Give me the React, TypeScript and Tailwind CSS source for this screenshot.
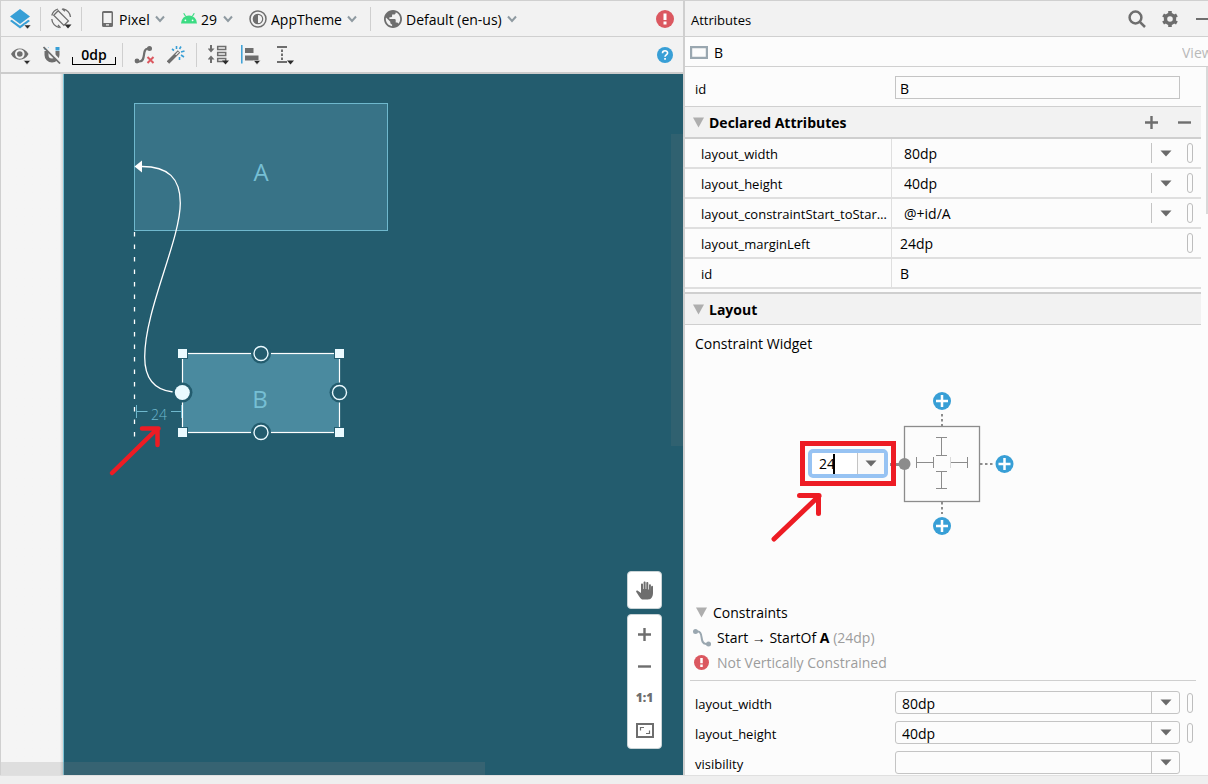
import React from 'react';

interface SelectFieldProps {
  label: string;
  value: string;
}

interface DeclaredAttribute {
  name: string;
  value: string;
  dropdown?: boolean;
  flag?: boolean;
}

const declaredAttributes: DeclaredAttribute[] = [
  { name: 'layout_width', value: '80dp', dropdown: true, flag: true },
  { name: 'layout_height', value: '40dp', dropdown: true, flag: true },
  { name: 'layout_constraintStart_toStartOf', value: '@+id/A', dropdown: true, flag: true },
  { name: 'layout_marginLeft', value: '24dp', flag: true },
  { name: 'id', value: 'B' },
];

const layoutAttributes: DeclaredAttribute[] = [
  { name: 'layout_width', value: '80dp', flag: true },
  { name: 'layout_height', value: '40dp', flag: true },
  { name: 'visibility', value: '' },
];

/* ---------- Icons ---------- */

const Chevron = () => (
  <svg width="11" height="8" viewBox="-1 0 11 8" fill="none" stroke="#8f9aa1" strokeWidth="2">
    <path d="M1 1.500 5 6 9 1.500" />
  </svg>
);

const Caret = () => (
  <svg width="12" height="7" viewBox="0 0 12 7">
    <path d="M.5.5h11L6 6.500z" fill="#6a6a6a" />
  </svg>
);

const Disclosure = () => (
  <svg width="11" height="11" viewBox="0 0 11 11" className="shrink-0">
    <path d="M0 .5h11L5.500 10.500z" fill="#aeaeae" />
  </svg>
);

const LayersIcon = () => (
  <svg width="22" height="22" viewBox="0 0 22 22">
    <path d="M10 1 20 8.500 10 16 0 8.500z" fill="#389fd6" />
    <path d="M1.700 11.800 10 17.800l8.300-6 1.700 1.300L10 20.500 0 13.100z" fill="#389fd6" />
    <path d="M14 17h7l-3.500 4z" fill="#2b2b2b" stroke="#f2f2f2" strokeWidth=".5" />
  </svg>
);

const RotateIcon = () => (
  <svg width="22" height="22" viewBox="-1 0 22 22" fill="none" stroke="#6e6e6e" strokeWidth="1.300">
    <path d="M7.200 2.700 17.400 12.900 12.900 17.400 2.700 7.200z" />
    <path d="M12 1a9 9 0 0 1 7.500 8M.8 11a9 9 0 0 0 7.700 8.500" />
    <path d="M.8 7.500A9 9 0 0 1 7 1M11 .8l3 2.500M9.500 19.800 7 17" />
    <path d="M13.500 16.500h7l-3.500 4z" fill="#2b2b2b" stroke="none" />
  </svg>
);

const PhoneIcon = () => (
  <svg width="15" height="16" viewBox="-2 0 15 16" fill="#6e6e6e">
    <path d="M1.500 0h8A1.500 1.500 0 0 1 11 1.500v13A1.500 1.500 0 0 1 9.500 16h-8A1.500 1.500 0 0 1 0 14.500v-13A1.500 1.500 0 0 1 1.500 0zM1.500 2v10h8V2zM4 13.300v1.200h3v-1.200z" fillRule="evenodd" />
  </svg>
);

const AndroidIcon = () => (
  <svg width="16" height="11" viewBox="0 0 16 11">
    <path d="M2.700.3 4.600 3.300M13.300.3l-1.900 3" stroke="#3ddc84" strokeWidth="1.200" />
    <path d="M0 10.500a8 8 0 0 1 16 0z" fill="#3ddc84" />
    <circle cx="4.400" cy="7.300" r=".9" fill="#fff" />
    <circle cx="11.600" cy="7.300" r=".9" fill="#fff" />
  </svg>
);

const ThemeIcon = () => (
  <svg width="18" height="18" viewBox="0 0 18 18" fill="none" stroke="#6e6e6e">
    <circle cx="9" cy="9" r="8" strokeWidth="1.500" />
    <circle cx="9" cy="9" r="4.700" strokeWidth="1.200" />
    <path d="M9 4a5 5 0 0 0 0 10z" fill="#6e6e6e" stroke="none" />
  </svg>
);

const GlobeIcon = () => (
  <svg width="18" height="18" viewBox="2 2 20 20" fill="#6e6e6e">
    <path d="M12 2C6.480 2 2 6.480 2 12s4.480 10 10 10 10-4.480 10-10S17.520 2 12 2zm-1 17.930c-3.950-.49-7-3.850-7-7.930 0-.62.08-1.210.21-1.790L9 15v1c0 1.100.9 2 2 2v1.930zm6.900-2.540c-.26-.81-1-1.390-1.900-1.390h-1v-3c0-.55-.45-1-1-1H8v-2h2c.55 0 1-.45 1-1V7h2c1.100 0 2-.9 2-2v-.41c2.930 1.190 5 4.060 5 7.410 0 2.080-.8 3.970-2.100 5.390z" />
  </svg>
);

const ErrorIcon = ({ size }: { size: number }) => (
  <svg width={size} height={size} viewBox="0 0 18 18" className="shrink-0">
    <circle cx="9" cy="9" r="9" fill="#db5860" />
    <path d="M7.500 3.500h3v6.500h-3zM7.500 11.500h3v3h-3z" fill="#fff" />
  </svg>
);

const HelpIcon = () => (
  <svg width="16" height="16" viewBox="0 0 16 16">
    <circle cx="8" cy="8" r="8" fill="#389fd6" />
    <path d="M5.500 6.200c0-3.200 5.100-3.100 5.100-.2C10.600 7.900 8 8 8 9.800" fill="none" stroke="#fff" strokeWidth="1.600" />
    <path d="M7.200 11h1.700v1.700H7.200z" fill="#fff" />
  </svg>
);

const EyeIcon = () => (
  <svg width="20" height="20" viewBox="0 0 20 20">
    <path d="M0 9C3.500 1.500 14 1.500 17.500 9 14 16.500 3.500 16.500 0 9z" fill="#6e6e6e" />
    <circle cx="8.800" cy="9" r="3.800" fill="none" stroke="#f2f2f2" strokeWidth="2" />
    <path d="M12.500 15.500h7L16 19.500z" fill="#2b2b2b" stroke="#f2f2f2" strokeWidth=".5" />
  </svg>
);

const MagnetIcon = () => (
  <svg width="18" height="18" viewBox="0 0 18 18">
    <path d="M3.500 5v4a5.500 5.500 0 0 0 11 0V5" fill="none" stroke="#6e6e6e" strokeWidth="4" />
    <path d="M1.500 1h4v3h-4zM12.500 1h4v3.500h-4z" fill="#389fd6" />
    <path d="M2 0l15.500 15.500" stroke="#f2f2f2" strokeWidth="2.400" />
    <path d="M.5 1 17 17.500" stroke="#6e6e6e" strokeWidth="1.700" />
  </svg>
);

const ClearConstraintsIcon = () => (
  <svg width="22" height="18" viewBox="0 0 22 18">
    <path d="M3 15.500h2.500c7 0 2-13 8.500-13h2" fill="none" stroke="#6e6e6e" strokeWidth="2.200" />
    <circle cx="3" cy="15" r="2.400" fill="#6e6e6e" />
    <circle cx="15.500" cy="2.600" r="2.500" fill="#6e6e6e" />
    <path d="M13.500 11l6 6M19.500 11l-6 6" stroke="#db5860" strokeWidth="2" />
  </svg>
);

const WandIcon = () => (
  <svg width="18" height="18" viewBox="0 0 18 18" fill="none">
    <path d="M1 16.500 12 5.500" stroke="#6e6e6e" strokeWidth="3.400" />
    <path d="M8.700 8.800 11.500 6" stroke="#f2f2f2" strokeWidth="1.200" />
    <path d="M9.500 0v3M5 3l2 1.500M14 .5l-1.500 2.500M14 6l3.500-1M14 9l3 2M12.500 11v3" stroke="#389fd6" strokeWidth="1.600" />
  </svg>
);

const DistributeIcon = () => (
  <svg width="22" height="20" viewBox="1 0 22 20">
    <path d="M4 0v6M4 18v-6" stroke="#6e6e6e" strokeWidth="2" />
    <path d="M.5 3.500h7L4 7.500zM.5 14.500h7L4 10.500z" fill="#6e6e6e" />
    <path d="M10.700 1.500h8v3h-8zM10.700 7.500h8v3h-8zM10.700 13.500h8v3h-8z" fill="none" stroke="#6e6e6e" strokeWidth="1.500" />
    <path d="M15 15.500h7l-3.500 4z" fill="#2b2b2b" />
  </svg>
);

const AlignIcon = () => (
  <svg width="20" height="20" viewBox="0 0 20 20">
    <path d="M.8 0v18.500" stroke="#389fd6" strokeWidth="1.500" />
    <path d="M4 3h8.500v5H4zM4 10.500h13.500v5H4z" fill="#6e6e6e" />
    <path d="M12.500 15.500h7L16 19.500z" fill="#2b2b2b" stroke="#f2f2f2" strokeWidth=".5" />
  </svg>
);

const GuidelineIcon = () => (
  <svg width="18" height="20" viewBox="0 0 18 20">
    <path d="M1 2h10M1 17h10" stroke="#6e6e6e" strokeWidth="2" />
    <path d="M6 4.500v10.500" stroke="#6e6e6e" strokeWidth="2" strokeDasharray="2.500 1.500" />
    <path d="M11 15.500h7l-3.500 4z" fill="#2b2b2b" />
  </svg>
);

const SearchIcon = () => (
  <svg width="18" height="18" viewBox="0 0 18 18" fill="none" stroke="#6e6e6e" strokeWidth="2.500">
    <circle cx="7.500" cy="7.500" r="5.900" />
    <path d="M11.800 11.800 17 17" />
  </svg>
);

const GearIcon = () => (
  <svg width="18" height="18" viewBox="1 0 18 18" fill="none">
    <circle cx="9" cy="9" r="4.500" stroke="#6e6e6e" strokeWidth="3.400" />
    <path d="M9 1v3M9 14v3M2.100 5l2.600 1.500M13.300 11.500l2.600 1.500M2.100 13l2.600-1.500M13.300 6.500 15.900 5" stroke="#6e6e6e" strokeWidth="3.600" />
  </svg>
);

const HandIcon = () => (
  <svg width="18" height="19" viewBox="0 0 18 19" fill="#6e6e6e">
    <path d="M6 18.500C4 17.500 2 13.500.3 11c-.6-1 .6-1.800 1.500-1.200L5 12V3.500c0-1.400 2-1.400 2 0V8h.6V1.500c0-1.400 2-1.400 2 0V8h.7V2c0-1.400 2-1.400 2 0v6.500h.7V4.300c0-1.300 1.900-1.300 1.900 0V13c0 3-1.500 5.500-3.500 5.500z" />
    <path d="M15.200 5.500c0-1.100 1.800-1.100 1.800 0V12c0 3.500-1.700 6.500-4.500 6.500z" />
  </svg>
);

const FitIcon = () => (
  <svg width="18" height="15" viewBox="0 0 18 15" fill="none" stroke="#6e6e6e">
    <path d="M1 1h16v13H1z" strokeWidth="2" />
    <path d="M4.500 7.500v-3h3.500M13.500 7.500v3H10" strokeWidth="1.200" />
  </svg>
);

/* ---------- Shared controls ---------- */

const Separator = () => <span className="h-6 w-px bg-[#cfcfcf]" />;

const FlagButton = ({ label }: { label: string }) => (
  <button type="button" aria-label={label} className="h-5 w-[6px] shrink-0 rounded-[3px] border border-[#bdbdbd]" />
);

const ToolbarSelect: React.FC<SelectFieldProps & { icon: React.ReactNode }> = ({ label, value, icon }) => (
  <label className="flex items-center gap-1">
    {icon}
    <select aria-label={label} className="appearance-none bg-transparent pt-0.5 text-[14px] leading-5">
      <option>{value}</option>
    </select>
    <Chevron />
  </label>
);

const IconButton = ({ label, children }: { label: string; children: React.ReactNode }) => (
  <button type="button" aria-label={label} className="flex shrink-0 items-center justify-center">
    {children}
  </button>
);

/* ---------- Blueprint ---------- */

const cornerHandles = [
  [182, 353],
  [339, 353],
  [182, 432],
  [339, 432],
];

const openAnchors = [
  [261, 353.5],
  [339.5, 392.5],
  [261, 432.5],
];

const BlueprintDrawing = () => (
  <svg
    width="400"
    height="420"
    viewBox="0 74 400 420"
    className="absolute top-0 left-0"
    fontFamily="'Open Sans', sans-serif"
  >
    {/* View A */}
    <rect x="134.500" y="103.500" width="253" height="127" fill="#387387" stroke="#6fb8cd" />
    <text x="261" y="181" fontSize="24" textAnchor="middle" fill="#76bfd4">A</text>

    {/* View B */}
    <rect x="182.500" y="353.500" width="157" height="79" fill="#4a8a9f" stroke="#fff" strokeWidth="1.200" />
    <text x="260" y="408" fontSize="24" textAnchor="middle" fill="#76bfd4">B</text>

    {/* Constraint and margin guides */}
    <path d="M134.500 232v205" stroke="#fff" strokeWidth="1.300" strokeDasharray="4.500 8" />
    <path d="M142 166.500C168 166.500 180.300 178 180.300 203C180.300 240 144.700 310 144.700 357C144.700 378 154 390 173 392" fill="none" stroke="#fff" strokeWidth="1.300" />
    <path d="M134.500 166.500 142 160.500v12z" fill="#fff" />
    <path d="M136.500 405v13M136.500 411.500h11M171 411.500h11M181.500 405v13" stroke="#6fb8cd" />
    <text x="159" y="420" fontSize="14" textAnchor="middle" fill="#6fb8cd" fontWeight="300">24</text>

    {cornerHandles.map(([x, y]) => (
      <rect key={`${x}-${y}`} x={x - 4.5} y={y - 4.5} width="10" height="10" fill="#eafaff" stroke="#235c6e" />
    ))}
    {openAnchors.map(([x, y]) => (
      <g key={`${x}-${y}`}>
        <circle cx={x} cy={y} r="10" fill="#235c6e" />
        <circle cx={x} cy={y} r="7" fill="#235c6e" stroke="#eafaff" strokeWidth="1.400" />
      </g>
    ))}
    <circle cx="182.500" cy="392.500" r="10" fill="#235c6e" />
    <circle cx="182.300" cy="392.500" r="7.500" fill="#eafaff" />

    <path d="M112 473 157 429M142 428.500h16.500M157.500 428.500V445" fill="none" stroke="#ed1c24" strokeWidth="4.500" strokeLinecap="round" />
  </svg>
);

const DesignSurface = () => (
  <div className="relative flex flex-1 overflow-hidden border-l border-[#d0d0d0] bg-[#f5f5f5]">
    <div className="w-[62px] shrink-0 bg-linear-to-r from-[#f5f5f5] from-95% to-[#d5d5d5]" />
    <div className="flex-1 border-l border-[#7cc4d6] bg-[#235c6e]" />
    <div className="absolute inset-y-0 -left-px">
      <BlueprintDrawing />
    </div>
    <div className="absolute right-0 top-[60px] h-[312px] w-3 bg-[#7f7f7f]/15" />
    <div className="absolute bottom-0 left-0 h-[13px] w-[484px] bg-[#808080]/20" />

    <div className="absolute bottom-[26px] right-[21px] flex flex-col gap-[5px]">
      <button type="button" aria-label="Pan" className="flex h-[38px] w-[35px] items-center justify-center rounded border border-[#c9d3d6] bg-white">
        <HandIcon />
      </button>
      <div className="flex h-[135px] w-[35px] flex-col items-center rounded border border-[#c9d3d6] bg-white pt-[3px] *:h-8">
        <IconButton label="Zoom in">
          <svg width="13" height="13" viewBox="0 0 13 13" stroke="#6e6e6e" strokeWidth="2.400">
            <path d="M6.500 0v13M0 6.500h13" />
          </svg>
        </IconButton>
        <IconButton label="Zoom out">
          <svg width="13" height="13" viewBox="0 0 13 13" stroke="#6e6e6e" strokeWidth="2.400">
            <path d="M0 6.500h13" />
          </svg>
        </IconButton>
        <button type="button" className="text-[12px] leading-4 font-extrabold text-[#6e6e6e]">1:1</button>
        <IconButton label="Zoom to fit">
          <FitIcon />
        </IconButton>
      </div>
    </div>
  </div>
);

/* ---------- Toolbars ---------- */

const TopToolbar = () => (
  <div className="flex h-9 items-center border-b border-l border-[#d0d0d0] bg-[#f2f2f2] px-[9px]">
    <IconButton label="Design surface"><LayersIcon /></IconButton>
    <div className="flex items-center gap-[9px] pl-2">
      <Separator />
      <IconButton label="Orientation"><RotateIcon /></IconButton>
      <Separator />
    </div>
    <div className="flex flex-1 items-center gap-4 pl-[18px]">
      <ToolbarSelect label="Device" value="Pixel" icon={<PhoneIcon />} />
      <ToolbarSelect label="API version" value="29" icon={<AndroidIcon />} />
      <div className="flex items-center gap-[13px]">
        <ToolbarSelect label="Theme" value="AppTheme" icon={<ThemeIcon />} />
        <Separator />
        <ToolbarSelect label="Locale" value="Default (en-us)" icon={<GlobeIcon />} />
      </div>
    </div>
    <IconButton label="Show errors"><ErrorIcon size={18} /></IconButton>
  </div>
);

const LayoutToolbar = () => (
  <div className="flex h-[37px] items-center border-b-2 border-l border-[#cccccc] bg-[#f2f2f2] px-[10px]">
    <div className="flex items-center gap-3">
      <IconButton label="View options"><EyeIcon /></IconButton>
      <IconButton label="Autoconnect"><MagnetIcon /></IconButton>
    </div>
    <button type="button" className="relative ml-[11px] h-5 w-11 text-center text-[14px] leading-4 font-semibold">
      0dp
      <span className="absolute inset-x-0 bottom-0 h-2 border-x border-b border-black" />
    </button>
    <div className="flex flex-1 items-center gap-[11px] pl-[6px]">
      <Separator />
      <IconButton label="Clear constraints"><ClearConstraintsIcon /></IconButton>
      <IconButton label="Infer constraints"><WandIcon /></IconButton>
      <Separator />
      <IconButton label="Pack"><DistributeIcon /></IconButton>
      <IconButton label="Align"><AlignIcon /></IconButton>
      <span className="pl-1"><IconButton label="Guidelines"><GuidelineIcon /></IconButton></span>
    </div>
    <IconButton label="Help"><HelpIcon /></IconButton>
  </div>
);

/* ---------- Attributes panel ---------- */

const SectionHeader = ({ title, children }: { title: string; children?: React.ReactNode }) => (
  <div className="flex flex-1 items-center gap-[5px] pl-2 pr-[10px]">
    <Disclosure />
    <h2 className="flex-1 pt-0.5 text-[14px] leading-5 font-bold">{title}</h2>
    {children}
  </div>
);

const DeclaredTable = () => (
  <table className="w-full table-fixed border-separate border-spacing-0">
    <tbody>
      {declaredAttributes.map((attr) => (
        <tr key={attr.name} className="h-[30px]">
          <th scope="row" className="w-[207px] truncate border-r border-b-2 border-[#dfdfdf] pt-0.5 pr-1 pb-0 pl-4 text-left text-[13px] leading-5 font-normal">
            {attr.name}
          </th>
          <td className="border-b-2 border-[#dfdfdf] p-0">
            <div className="flex h-7 items-center pr-2">
              {attr.dropdown ? (
                <label className="relative mr-2 flex flex-1 items-center">
                  <select aria-label={attr.name} className="w-full appearance-none bg-transparent pt-0.5 pl-3 text-[14px] leading-5">
                    <option>{attr.value}</option>
                  </select>
                  <span className="pointer-events-none absolute right-0 flex h-5 w-7 items-center justify-center border-l border-[#c4c4c4]">
                    <Caret />
                  </span>
                </label>
              ) : (
                <input aria-label={attr.name} defaultValue={attr.value} className="mr-2 w-full flex-1 bg-transparent pt-0.5 pl-2 text-[14px] leading-5 outline-none" />
              )}
              {attr.flag && <FlagButton label={`Pick resource for ${attr.name}`} />}
            </div>
          </td>
        </tr>
      ))}
    </tbody>
  </table>
);

const plusHandles = [
  [942, 401],
  [1004.5, 464],
  [942, 526],
];

const ConstraintWidget = () => (
  <div className="relative h-[245px]">
    <svg width="340" height="170" viewBox="685 380 340 170" className="absolute top-[25px] left-0" fill="none" stroke="#8c8c8c">
      <rect x="904.500" y="426.500" width="75" height="75" strokeWidth="1.300" />
      <path d="M942 414v12M942 502v12M980 464h13" strokeWidth="2" strokeDasharray="2.500 2.500" />
      <path d="M890 464.500h14" strokeWidth="3" />
      <circle cx="904.500" cy="464" r="6" fill="#8c8c8c" stroke="none" />
      <path d="M941.500 437.500v18M936 437.500h11M936 455.500h11M941.500 471.500v17M936 471.500h11M936 488.500h11" />
      <path d="M916.500 462.500h17M916.500 457v11M933.500 457v11M950.500 462.500h17M967.500 457v11" />
      <path d="M950.500 457v11" stroke="#dadada" />
      {plusHandles.map(([x, y]) => (
        <g key={`${x}-${y}`}>
          <circle cx={x} cy={y} r="9" fill="#389fd6" stroke="none" />
          <path d={`M${x} ${y - 6}v12M${x - 6} ${y}h12`} stroke="#fff" strokeWidth="2.500" />
        </g>
      ))}
      <path d="M774 539 819 496M799.500 495.500h19.500M818.500 495.500v18" stroke="#ed1c24" strokeWidth="5" strokeLinecap="round" />
    </svg>
    <div className="absolute top-[86px] left-[115px] flex h-[45px] w-24 items-center justify-center border-5 border-[#ed1c24]">
      <div className="flex h-[29px] w-20 rounded-[5px] border-4 border-[#97c3f3] bg-white">
        <label className="flex flex-1 items-center pl-[7px]">
          <input aria-label="Start margin" defaultValue="24" className="w-[14px] bg-transparent text-[14px] leading-5 outline-none" />
          <span className="h-5 w-0.5 shrink-0 bg-black" />
        </label>
        <button type="button" aria-label="Margin values" className="flex w-[27px] items-center justify-center border-l border-[#c4c4c4] bg-[#fafafa]">
          <Caret />
        </button>
      </div>
    </div>
  </div>
);

const LayoutField = ({ name, value, flag }: DeclaredAttribute) => (
  <div className="flex h-[23px] items-center pl-[10px]">
    <label htmlFor={`layout-${name}`} className="w-[200px] shrink-0 pt-0.5 text-[13px] leading-5">{name}</label>
    <div className="relative mr-[7px] flex w-[285px] items-center">
      <select id={`layout-${name}`} className="h-[23px] w-full appearance-none rounded-[3px] border border-[#c4c4c4] bg-transparent pt-0.5 pl-[6px] text-[14px] leading-5">
        <option>{value}</option>
      </select>
      <span className="pointer-events-none absolute right-0 flex h-[23px] w-[29px] items-center justify-center border-l border-[#c4c4c4]">
        <Caret />
      </span>
    </div>
    {flag && <FlagButton label={`Pick resource for ${name}`} />}
  </div>
);

const AttributesPanel = () => (
  <aside className="flex w-[525px] shrink-0 flex-col overflow-hidden border-l-2 border-[#cfcfcf] bg-[#fcfcfc]">
    <div className="flex h-9 items-center border-b border-[#d0d0d0] bg-[#f2f2f2] pl-[6px]">
      <h1 className="flex-1 pt-0.5 text-[13px] leading-5">Attributes</h1>
      <div className="flex items-center gap-4">
        <IconButton label="Search"><SearchIcon /></IconButton>
        <IconButton label="Settings"><GearIcon /></IconButton>
        <button type="button" aria-label="Hide" className="h-0.5 w-3 bg-[#6e6e6e]" />
      </div>
    </div>
    <div className="flex h-[30px] items-center justify-between border-b border-[#d0d0d0] pt-0.5 pl-[5px]">
      <span className="flex items-center gap-[6px] text-[14px] leading-5">
        <svg width="18" height="13" viewBox="0 0 18 13">
          <path d="M1 1h16v11H1z" fill="none" stroke="#9aa7b0" strokeWidth="2.400" />
        </svg>
        B
      </span>
      <span className="w-[26px] overflow-hidden text-[14px] leading-5 text-[#b9b9b9]">View</span>
    </div>

    <div className="relative pr-[7px]">
      <div className="absolute top-0 right-0 h-[147px] w-0.5 bg-[#d9d9d9]" />
      <div className="flex h-10 items-center border-b border-[#d0d0d0] pt-0.5 pl-[10px]">
        <label htmlFor="view-id" className="w-[200px] shrink-0 pt-0.5 text-[13px] leading-5">id</label>
        <input id="view-id" defaultValue="B" className="h-[23px] w-[285px] border border-[#c4c4c4] pt-0.5 pl-1 text-[14px] leading-5 outline-none" />
      </div>

      <div className="flex h-8 border-b-2 border-[#cfcfcf] bg-[#f2f2f2]">
        <SectionHeader title="Declared Attributes">
          <div className="flex items-center gap-5">
            <IconButton label="Add attribute">
              <svg width="13" height="13" viewBox="0 0 13 13" stroke="#6e6e6e" strokeWidth="2.400">
                <path d="M6.500 0v13M0 6.500h13" />
              </svg>
            </IconButton>
            <IconButton label="Remove attribute">
              <svg width="13" height="13" viewBox="0 0 13 13" stroke="#6e6e6e" strokeWidth="2.400">
                <path d="M0 6.500h13" />
              </svg>
            </IconButton>
          </div>
        </SectionHeader>
      </div>
      <DeclaredTable />

      <div className="mt-[3px] flex h-[33px] border-t-2 border-b border-[#cfcfcf] bg-[#f2f2f2]">
        <SectionHeader title="Layout" />
      </div>
      <h3 className="pt-2 pl-[10px] text-[14px] leading-[22px]">Constraint Widget</h3>
      <ConstraintWidget />

      <div className="flex h-[25px] items-center gap-[6px] pl-[11px] text-[14px]">
        <Disclosure />
        Constraints
      </div>
      <div className="flex h-[25px] items-center gap-[6px] pl-2 text-[14px]">
        <svg width="18" height="18" viewBox="0 0 18 18">
          <path d="M2.500 2.500H5c6 0 1 12.500 8 12.500h2" fill="none" stroke="#9aa7b0" strokeWidth="2" />
          <circle cx="2.500" cy="2.500" r="2.500" fill="#9aa7b0" />
          <circle cx="15.500" cy="15" r="2.500" fill="#9aa7b0" />
        </svg>
        <span>Start → StartOf <b>A</b> <span className="text-[#9c9c9c]">(24dp)</span></span>
      </div>
      <div className="flex h-[25px] items-center gap-2 pl-[9px] text-[14px] text-[#9c9c9c]">
        <ErrorIcon size={15} />
        Not Vertically Constrained
      </div>
      <div className="mx-[5px] mt-[5px] mb-[10px] h-px bg-[#cfcfcf]" />
      <div className="flex flex-col gap-[7px] pb-px">
        {layoutAttributes.map((attr) => (
          <LayoutField key={attr.name} {...attr} />
        ))}
      </div>
    </div>
  </aside>
);

const App: React.FC = () => {
  return (
    <div className="flex min-h-screen flex-col bg-[#efefef] font-['Open_Sans',sans-serif] text-black">
      <div className="flex flex-1 border-t border-[#d0d0d0]">
        <main className="flex min-w-0 flex-1 flex-col">
          <TopToolbar />
          <LayoutToolbar />
          <DesignSurface />
        </main>
        <AttributesPanel />
      </div>
      <footer className="h-[9px] shrink-0 border-t border-[#e0e0e0] bg-[#efefef]" />
    </div>
  );
};

export default App;
